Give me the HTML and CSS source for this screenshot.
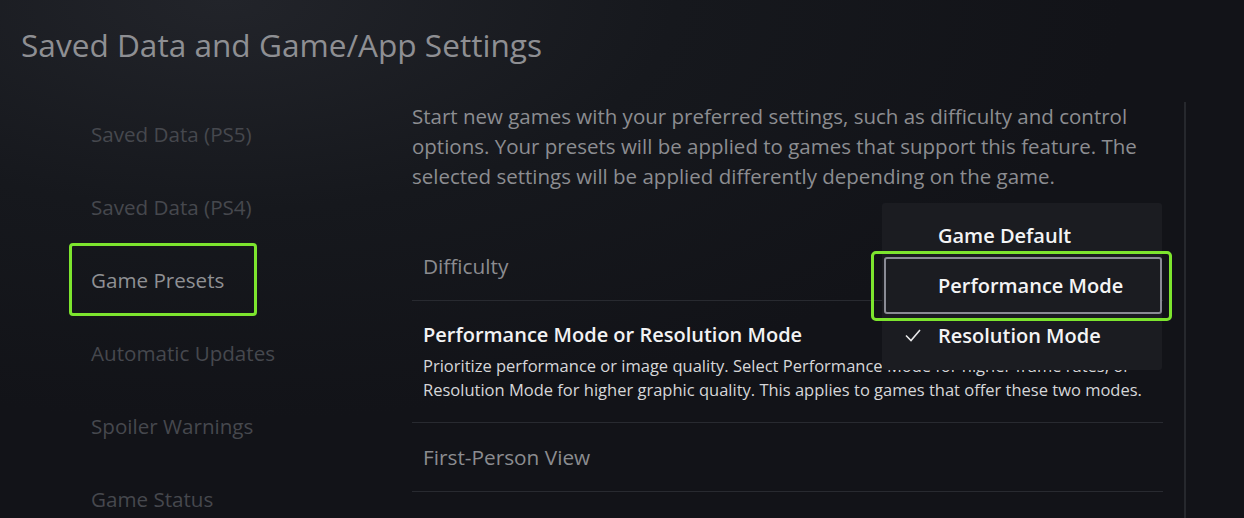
FILE: index.html
```html
<!DOCTYPE html>
<html lang="en">
<head>
    <meta charset="UTF-8">
    <meta name="viewport" content="width=device-width, initial-scale=1.0">
    <title>Saved Data and Game/App Settings</title>
    <link rel="stylesheet" href="styles.css">
</head>
<body>
    <div class="screen">
        <h1 class="page-title">Saved Data and Game/App Settings</h1>

        <div class="layout">
            <nav class="sidebar">
                <div class="nav-item">Saved Data (PS5)</div>
                <div class="nav-item">Saved Data (PS4)</div>
                <div class="nav-item nav-item-active">Game Presets</div>
                <div class="nav-item">Automatic Updates</div>
                <div class="nav-item">Spoiler Warnings</div>
                <div class="nav-item">Game Status</div>
            </nav>

            <section class="content">
                <p class="intro">Start new games with your preferred settings, such as difficulty and control options. Your presets will be applied to games that support this feature. The selected settings will be applied differently depending on the game.</p>

                <div class="setting-list">
                    <div class="setting setting-simple">Difficulty</div>
                    <div class="setting setting-focus">
                        <div class="setting-title">Performance Mode or Resolution Mode</div>
                        <p class="setting-desc">Prioritize performance or image quality. Select Performance Mode for higher frame rates, or Resolution Mode for higher graphic quality. This applies to games that offer these two modes.</p>
                    </div>
                    <div class="setting setting-simple">First-Person View</div>
                </div>

                <div class="dropdown">
                    <div class="option">
                        <span class="option-check"></span>
                        <span>Game Default</span>
                    </div>
                    <div class="option option-focus">
                        <span class="option-check"></span>
                        <span>Performance Mode</span>
                    </div>
                    <div class="option">
                        <span class="option-check">
                            <svg width="16" height="13" viewBox="0 0 16 13"><polyline points="1,6.5 6,11.5 15,1" fill="none" stroke="#e8e8ea" stroke-width="1.6"/></svg>
                        </span>
                        <span>Resolution Mode</span>
                    </div>
                </div>
            </section>

            <div class="scrollbar"></div>
        </div>
    </div>
</body>
</html>
```

FILE: styles.css
```css
html, body {
    margin: 0;
    padding: 0;
}

body {
    width: 1244px;
    height: 518px;
    overflow: hidden;
    font-family: "Open Sans", "Noto Sans", sans-serif;
    background: radial-gradient(ellipse 900px 420px at 18% 0%, #22242a 0%, #16181d 50%, #121318 100%);
    color: #8c8d91;
}

.screen {
    height: 518px;
}

.page-title {
    margin: 0;
    padding: 27px 0 0 21px;
    font-size: 31.6px;
    line-height: 36px;
    font-weight: 500;
    color: #8e8f93;
}

.layout {
    display: flex;
    margin-top: 34px;
}

.sidebar {
    flex: 0 0 412px;
    display: flex;
    flex-direction: column;
    align-items: flex-start;
    padding-left: 69px;
    box-sizing: border-box;
}

.nav-item {
    display: flex;
    align-items: center;
    height: 73px;
    box-sizing: border-box;
    padding: 0 30px 0 19px;
    border: 3px solid transparent;
    border-radius: 4px;
    font-size: 20.6px;
    font-weight: 500;
    color: #46484e;
}

.nav-item-active {
    border-color: #7de52e;
    color: #8f9094;
}

.content {
    position: relative;
    flex: 0 0 751px;
    padding-top: 4px;
}

.intro {
    margin: 0;
    font-size: 20.5px;
    line-height: 30px;
    font-weight: 500;
    color: #8c8d91;
}

.setting-list {
    margin-top: 41px;
}

.setting {
    border-bottom: 1px solid #282a30;
    padding: 0 11px;
}

.setting-simple {
    display: flex;
    align-items: center;
    height: 68px;
    font-size: 20.8px;
    font-weight: 500;
    color: #8b8c90;
}

.setting-focus {
    padding-top: 20px;
    padding-bottom: 20px;
}

.setting-title {
    font-size: 20px;
    line-height: 28px;
    font-weight: 600;
    color: #f2f2f3;
}

.setting-desc {
    margin: 5px 0 0;
    font-size: 16.5px;
    line-height: 24px;
    color: #d6d7d9;
}

.dropdown {
    position: absolute;
    left: 470px;
    top: 106px;
    width: 280px;
    padding: 7px 0 10px;
    background: #1b1c21;
    border-radius: 3px;
    z-index: 2;
}

.option {
    position: relative;
    display: flex;
    align-items: center;
    height: 50px;
    font-size: 20px;
    font-weight: 600;
    color: #f4f4f5;
}

.option-check {
    display: flex;
    align-items: center;
    width: 56px;
    padding-left: 23px;
    box-sizing: border-box;
}

.option-focus::before {
    content: "";
    position: absolute;
    top: -3px;
    bottom: -4px;
    left: 2px;
    right: 0;
    border: 2px solid #8a8b95;
    border-radius: 3px;
}

.option-focus::after {
    content: "";
    position: absolute;
    top: -9px;
    bottom: -11px;
    left: -11px;
    right: -10px;
    border: 3px solid #7de52e;
    border-radius: 5px;
}

.scrollbar {
    flex: 0 0 2px;
    margin: 5px 0 0 21px;
    height: 430px;
    background: #26282d;
}
```
